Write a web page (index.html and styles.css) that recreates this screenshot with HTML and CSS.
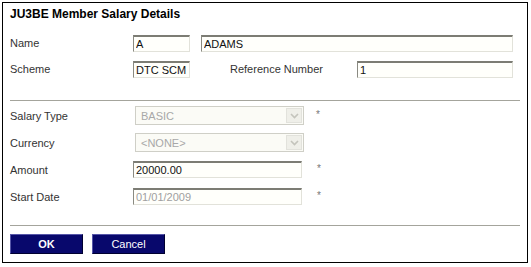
FILE: index.html
```html
<!DOCTYPE html>
<html lang="en">
  <head>
    <meta charset="UTF-8" />
    <meta name="viewport" content="width=device-width, initial-scale=1.0" />
    <title>Member Salary Details</title>
    <link rel="stylesheet" href="styles.css">
  </head>
  <body>
    <div class="panel">
      <h1 class="title">JU3BE Member Salary Details</h1>

      <div class="row">
        <span class="label">Name</span>
        <input type="text" class="field short" value="A" />
        <input type="text" class="field surname" value="ADAMS" />
      </div>
      <div class="row">
        <span class="label">Scheme</span>
        <input type="text" class="field short" value="DTC SCM" />
        <span class="label ref-label">Reference Number</span>
        <input type="text" class="field ref" value="1" />
      </div>

      <div class="rule rule-top"></div>

      <div class="row row-lower">
        <span class="label">Salary Type</span>
        <div class="select">
          <span class="select-text">BASIC</span>
          <span class="select-btn">
            <svg width="9" height="6" viewBox="0 0 9 6"><path d="M1 1 L4.5 4.5 L8 1" fill="none" stroke="#c4c4bc" stroke-width="1.6" /></svg>
          </span>
        </div>
        <span class="req">*</span>
      </div>
      <div class="row row-lower">
        <span class="label">Currency</span>
        <div class="select">
          <span class="select-text">&lt;NONE&gt;</span>
          <span class="select-btn">
            <svg width="9" height="6" viewBox="0 0 9 6"><path d="M1 1 L4.5 4.5 L8 1" fill="none" stroke="#c4c4bc" stroke-width="1.6" /></svg>
          </span>
        </div>
      </div>
      <div class="row row-lower">
        <span class="label">Amount</span>
        <input type="text" class="field wide" value="20000.00" />
        <span class="req req-field">*</span>
      </div>
      <div class="row row-lower">
        <span class="label">Start Date</span>
        <input type="text" class="field wide disabled" value="01/01/2009" disabled />
        <span class="req req-field">*</span>
      </div>

      <div class="rule rule-bottom"></div>

      <div class="buttons">
        <button class="btn btn-default">OK</button>
        <button class="btn">Cancel</button>
      </div>
    </div>
  </body>
</html>
```

FILE: styles.css
```css
body {
  margin: 2px;
  font-family: "Liberation Sans", Arial, sans-serif;
  background-color: #fff;
}

.panel {
  box-sizing: border-box;
  width: 526px;
  height: 261px;
  border: 1px solid #000;
  padding: 0 7px;
}

.title {
  margin: 0;
  height: 23px;
  line-height: 23px;
  font-size: 12px;
  font-weight: bold;
  color: #000;
}

.row {
  display: flex;
  align-items: center;
  height: 26px;
}

.title + .row {
  margin-top: 4px;
}

.row-lower {
  height: 27px;
}

.label {
  width: 123px;
  flex-shrink: 0;
  font-size: 11px;
  color: #333;
}

.ref-label {
  width: 127px;
  margin-left: 40px;
}

.field {
  box-sizing: border-box;
  height: 17px;
  margin: 0;
  padding: 0 2px;
  border-style: solid;
  border-width: 2px 1px 1px 1px;
  border-color: #7c7c74 #e2e2da #e2e2da #8a8a82;
  background-color: #fffffb;
  font-family: "Liberation Sans", Arial, sans-serif;
  font-size: 11px;
  color: #111;
  outline: none;
}

.short {
  width: 57px;
}

.surname {
  width: 312px;
  margin-left: 11px;
}

.ref {
  width: 156px;
}

.wide {
  width: 169px;
}

.disabled {
  color: #a0a0a0;
  background-color: #fffffb;
}

.select {
  box-sizing: border-box;
  display: flex;
  align-items: center;
  width: 169px;
  height: 19px;
  margin-left: 2px;
  border: 1px solid #cfcfc7;
  background-color: #fbfbf6;
}

.select-text {
  flex: 1;
  padding-left: 5px;
  font-size: 11px;
  color: #a8a8a8;
}

.select-btn {
  box-sizing: border-box;
  display: flex;
  align-items: center;
  justify-content: center;
  width: 16px;
  height: 15px;
  margin-right: 1px;
  background-color: #efefe9;
  border: 1px solid #e2e2dc;
}

.req {
  align-self: flex-start;
  margin-top: 7px;
  margin-left: 12px;
  font-size: 10px;
  color: #777;
}

.req-field {
  margin-left: 15px;
}

.rule {
  border-top: 1px solid #a4a49c;
}

.rule-top {
  margin-top: 18px;
  margin-bottom: 1px;
}

.rule-bottom {
  margin-top: 15px;
}

.buttons {
  display: flex;
  gap: 9px;
  margin-top: 8px;
}

.btn {
  box-sizing: border-box;
  width: 73px;
  height: 20px;
  margin: 0;
  padding: 0;
  border: 1px solid;
  border-color: #5656a8 #000030 #000030 #5656a8;
  background-color: #08086c;
  color: #fff;
  font-family: "Liberation Sans", Arial, sans-serif;
  font-size: 11px;
}

.btn-default {
  font-weight: bold;
}
```
